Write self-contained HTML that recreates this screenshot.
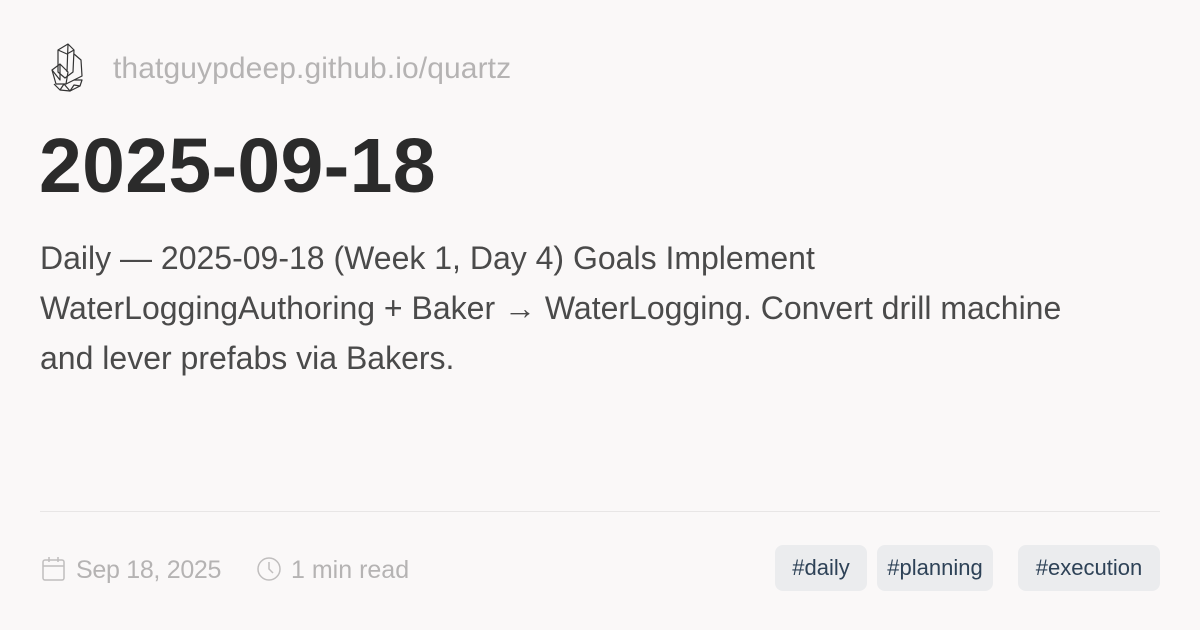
<!DOCTYPE html>
<html><head><meta charset="utf-8"><style>
html,body{margin:0;padding:0;}
body{width:1200px;height:630px;background:#faf8f8;position:relative;overflow:hidden;font-family:"Liberation Sans",sans-serif;}
.abs{position:absolute;white-space:nowrap;}
.site{left:113px;top:52px;font-size:30px;color:#b5b3b3;letter-spacing:0.1px;}
.title{left:39px;top:122px;font-size:77px;font-weight:bold;color:#2b2b2b;letter-spacing:0.3px;}
.desc{left:40px;top:233px;font-size:32px;line-height:50px;color:#4a4a4a;}
.hr{left:40px;top:511px;width:1120px;height:1px;background:#e8e6e6;}
.meta{top:556px;font-size:25px;color:#b5b3b3;letter-spacing:-0.3px;}
.tag{top:545px;height:46px;line-height:46px;background:#ebecee;border-radius:8px;color:#2e4257;font-size:22px;text-align:center;}
</style></head><body>
<svg class="abs" style="left:46px;top:42px" width="42" height="52" viewBox="0 0 38 52" fill="none" stroke="#333" stroke-width="1.2" stroke-linejoin="round">
<path d="M10 8 L20 2 L26 8 L25 30 L17 36 L10 30 Z"/>
<path d="M20 2 L19 30 M26 8 L19 12 L10 8"/>
<path d="M26 12 L33 18 L34 34 L26 38"/>
<path d="M4 28 L12 22 L20 30 L18 42 L8 42 Z"/>
<path d="M12 22 L12 38 L4 28"/>
<path d="M6 42 L12 48 L22 49 L32 44 L34 38 L26 38 L18 42"/>
<path d="M12 48 L16 42 L22 49 L26 43 L32 44"/>
</svg>
<div class="abs site">thatguypdeep.github.io/quartz</div>
<div class="abs title">2025-09-18</div>
<div class="abs desc">Daily — 2025-09-18 (Week 1, Day 4) Goals Implement<br>WaterLoggingAuthoring + Baker → WaterLogging. Convert drill machine<br>and lever prefabs via Bakers.</div>
<div class="abs hr"></div>
<svg class="abs" style="left:42px;top:556px" width="24" height="26" viewBox="0 0 24 26" fill="none" stroke="#c0bebe" stroke-width="1.5"><rect x="1" y="4" width="21" height="20" rx="2"/><path d="M1 10 H22 M7 1 V6 M16 1 V6"/></svg>
<div class="abs meta" style="left:76px">Sep 18, 2025</div>
<svg class="abs" style="left:256px;top:556px" width="26" height="26" viewBox="0 0 26 26" fill="none" stroke="#c0bebe" stroke-width="1.5"><circle cx="13" cy="13" r="11"/><path d="M13 6 V13 L17 17"/></svg>
<div class="abs meta" style="left:291px;letter-spacing:0">1 min read</div>
<div class="abs tag" style="left:775px;width:92px">#daily</div>
<div class="abs tag" style="left:877px;width:116px">#planning</div>
<div class="abs tag" style="left:1018px;width:142px">#execution</div>
</body></html>
